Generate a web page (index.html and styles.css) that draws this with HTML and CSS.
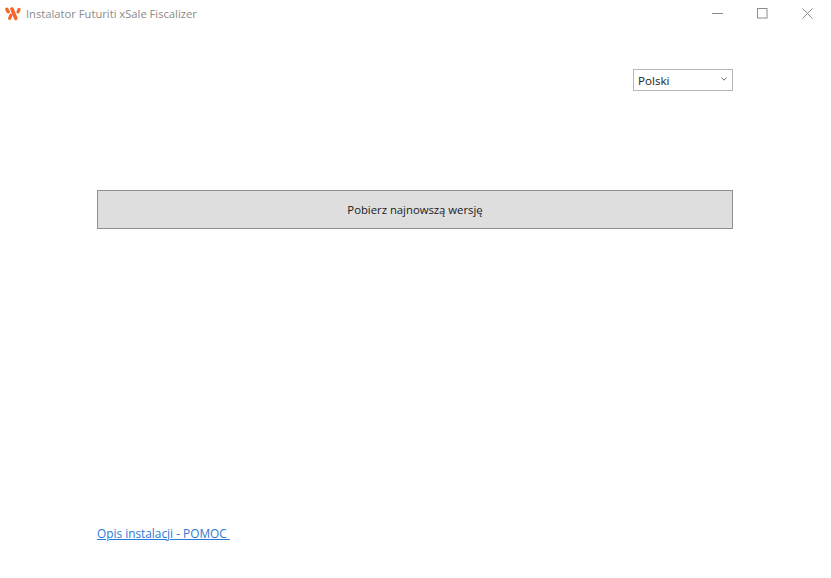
FILE: index.html
```html
<!DOCTYPE html>
<html lang="pl">
<head>
<meta charset="utf-8">
<title>Instalator Futuriti xSale Fiscalizer</title>
<link rel="stylesheet" href="styles.css">
</head>
<body>
<div class="window">
  <header class="titlebar">
    <svg class="logo" width="16" height="14" viewBox="0 0 16 14">
      <g fill="none" stroke="#f4662a" stroke-linecap="round">
        <path d="M1.9 2.2L3.2 4.8" stroke-width="3.4"/>
        <path d="M7 2L10.8 11.4" stroke-width="3.6"/>
        <path d="M4.6 11.4L6 8.2" stroke-width="3.2"/>
        <path d="M14 2.4L13 4.8" stroke-width="3.2"/>
      </g>
    </svg>
    <span class="title">Instalator Futuriti xSale Fiscalizer</span>
    <div class="controls">
      <svg class="ctl" width="11" height="11" viewBox="0 0 11 11"><path d="M0 5.5H11" stroke="#8c8c8c" fill="none"/></svg>
      <svg class="ctl" width="11" height="11" viewBox="0 0 11 11"><rect x=".5" y=".5" width="9.5" height="9.5" stroke="#8c8c8c" fill="none"/></svg>
      <svg class="ctl" width="11" height="11" viewBox="0 0 11 11"><path d="M.5 .5L10.5 10.5M10.5 .5L.5 10.5" stroke="#8c8c8c" fill="none"/></svg>
    </div>
  </header>
  <main class="content">
    <div class="lang-row">
      <div class="select">
        <span>Polski</span>
        <svg class="chevron" width="6" height="4" viewBox="0 0 6 4"><path d="M.4 .6L3 3.2L5.6 .6" stroke="#666" fill="none"/></svg>
      </div>
    </div>
    <button class="download">Pobierz najnowszą wersję</button>
    <a class="help" href="#">Opis instalacji - POMOC&nbsp;</a>
  </main>
</div>
</body>
</html>
```
FILE: styles.css
```css
* { box-sizing: border-box; }
html, body { margin: 0; height: 100%; }
body { background: #fff; font-family: "Open Sans", "Noto Sans", sans-serif; font-size: 12px; color: #1a1a1a; }
.window { width: 831px; height: 578px; display: flex; flex-direction: column; overflow: hidden; }
.titlebar { height: 27px; flex: none; display: flex; align-items: center; padding-left: 5px; }
.logo { flex: none; margin-right: 5px; }
.title { color: #8a8a8a; font-size: 11.2px; white-space: nowrap; }
.controls { margin-left: auto; display: flex; align-items: center; gap: 34px; padding-right: 18px; }
.ctl { display: block; }
.content { flex: 1; display: flex; flex-direction: column; padding: 42px 98px 37px 97px; }
.lang-row { display: flex; justify-content: flex-end; }
.select { width: 100px; height: 22px; border: 1px solid #b5b5b5; display: flex; align-items: center; justify-content: space-between; padding: 0 5px 0 4px; color: #222; font-size: 11.6px; }
.chevron { margin-bottom: 2px; }
.download { margin-top: 99px; height: 39px; width: 100%; background: #dedede; border: 1px solid #8f8f8f; font: inherit; font-size: 11.3px; color: #1a1a1a; padding: 0 0 1px; }
.help { margin-top: auto; align-self: flex-start; color: #2a78d6; font-size: 11.85px; text-decoration: underline; line-height: 16px; }
```
